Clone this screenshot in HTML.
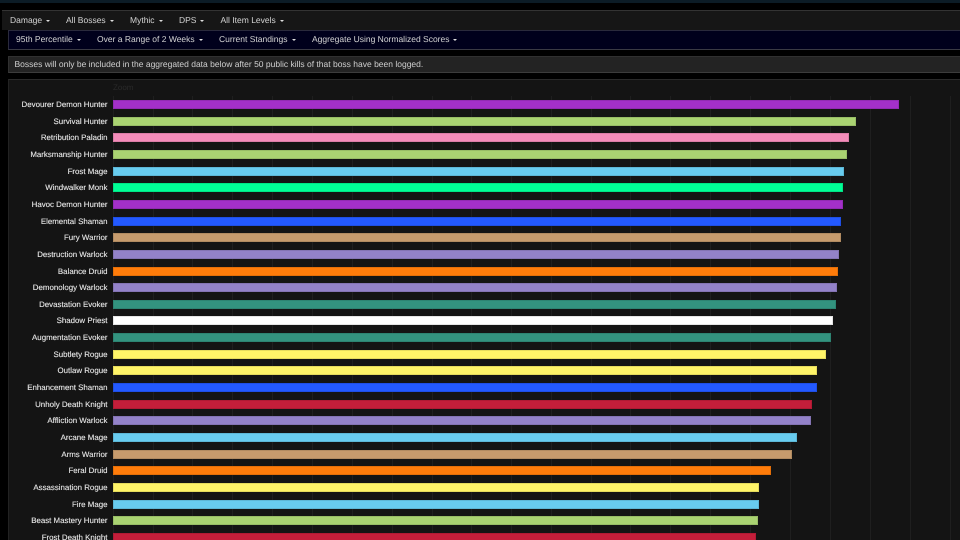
<!DOCTYPE html>
<html><head><meta charset="utf-8"><style>
html,body{margin:0;padding:0;background:#000;width:960px;height:540px;overflow:hidden}
body{position:relative;font-family:"Liberation Sans",sans-serif;color:#ddd;text-rendering:geometricPrecision}
.a{position:absolute;box-sizing:border-box}
.m{position:absolute;white-space:nowrap;font-size:8.5px;line-height:12px;color:#d4d4d4;filter:blur(.25px)}
.m i{display:inline-block;width:0;height:0;border-left:2.2px solid transparent;border-right:2.2px solid transparent;border-top:2.6px solid #ddd;margin-left:4px;vertical-align:1px}
.l{position:absolute;right:852.5px;white-space:nowrap;font-size:7.9px;line-height:10px;color:#e6e6e6;margin-top:1px;-webkit-text-stroke:.12px #e6e6e6;filter:blur(.25px)}
.b{position:absolute;left:113px;height:9px;box-sizing:border-box;border:1px solid rgba(0,0,0,.1)}
.g{position:absolute;top:96px;height:444px;width:1px;background:#1f1f1f}
</style></head><body>
<div class="a" style="left:0;top:0;width:960px;height:3px;background:#0c1c26"></div>
<div class="a" style="left:2px;top:10px;width:958px;height:20px;background:#161616;border-top:1px solid #333"></div>
<div class="m" style="left:10px;top:14px">Damage<i></i></div>
<div class="m" style="left:66px;top:14px">All Bosses<i></i></div>
<div class="m" style="left:130px;top:14px">Mythic<i></i></div>
<div class="m" style="left:179px;top:14px">DPS<i></i></div>
<div class="m" style="left:220.5px;top:14px">All Item Levels<i></i></div>
<div class="a" style="left:8px;top:30px;width:952px;height:20px;background:#00001c;border-top:1px solid #2a2a3c;border-bottom:1px solid #3a3a44;border-left:1px solid #2a2a3c"></div>
<div class="m" style="left:16px;top:33px">95th Percentile<i></i></div>
<div class="m" style="left:97px;top:33px">Over a Range of 2 Weeks<i></i></div>
<div class="m" style="left:219px;top:33px">Current Standings<i></i></div>
<div class="m" style="left:312px;top:33px">Aggregate Using Normalized Scores<i></i></div>
<div class="a" style="left:8px;top:56px;width:952px;height:17px;background:#232323;border-top:1px solid #303030;border-bottom:1px solid #3c3c3c;border-left:1px solid #303030"></div>
<div class="m" style="left:14.5px;top:58px;color:#d0d0d0">Bosses will only be included in the aggregated data below after 50 public kills of that boss have been logged.</div>
<div class="a" style="left:8px;top:79px;width:952px;height:461px;background:#141414;border-top:1px solid #2a2a2a;border-left:1px solid #222"></div>
<div class="a" style="left:113px;top:83px;font-size:8px;line-height:10px;color:#2a2a2a">Zoom</div>
<div class="g" style="left:113px"></div><div class="g" style="left:153px"></div><div class="g" style="left:192px"></div><div class="g" style="left:232px"></div><div class="g" style="left:272px"></div><div class="g" style="left:312px"></div><div class="g" style="left:352px"></div><div class="g" style="left:392px"></div><div class="g" style="left:432px"></div><div class="g" style="left:471px"></div><div class="g" style="left:511px"></div><div class="g" style="left:551px"></div><div class="g" style="left:591px"></div><div class="g" style="left:630px"></div><div class="g" style="left:670px"></div><div class="g" style="left:710px"></div><div class="g" style="left:750px"></div><div class="g" style="left:790px"></div><div class="g" style="left:830px"></div><div class="g" style="left:870px"></div><div class="g" style="left:910px"></div><div class="g" style="left:950px"></div>
<div class="l" style="top:99px">Devourer Demon Hunter</div><div class="b" style="top:100px;width:786px;background:#a330c9"></div>
<div class="l" style="top:115.65px">Survival Hunter</div><div class="b" style="top:116.65px;width:743px;background:#aad372"></div>
<div class="l" style="top:132.3px">Retribution Paladin</div><div class="b" style="top:133.3px;width:736px;background:#f48cba"></div>
<div class="l" style="top:148.95px">Marksmanship Hunter</div><div class="b" style="top:149.95px;width:734px;background:#aad372"></div>
<div class="l" style="top:165.6px">Frost Mage</div><div class="b" style="top:166.6px;width:731px;background:#68ccef"></div>
<div class="l" style="top:182.25px">Windwalker Monk</div><div class="b" style="top:183.25px;width:730px;background:#00ff96"></div>
<div class="l" style="top:198.9px">Havoc Demon Hunter</div><div class="b" style="top:199.9px;width:729.5px;background:#a330c9"></div>
<div class="l" style="top:215.55px">Elemental Shaman</div><div class="b" style="top:216.55px;width:728px;background:#2359ff"></div>
<div class="l" style="top:232.2px">Fury Warrior</div><div class="b" style="top:233.2px;width:728px;background:#c69b6d"></div>
<div class="l" style="top:248.85px">Destruction Warlock</div><div class="b" style="top:249.85px;width:726px;background:#9382c9"></div>
<div class="l" style="top:265.5px">Balance Druid</div><div class="b" style="top:266.5px;width:725px;background:#ff7c0a"></div>
<div class="l" style="top:282.15px">Demonology Warlock</div><div class="b" style="top:283.15px;width:724px;background:#9382c9"></div>
<div class="l" style="top:298.8px">Devastation Evoker</div><div class="b" style="top:299.8px;width:723px;background:#33937f"></div>
<div class="l" style="top:315.45px">Shadow Priest</div><div class="b" style="top:316.45px;width:720px;background:#fff"></div>
<div class="l" style="top:332.1px">Augmentation Evoker</div><div class="b" style="top:333.1px;width:718px;background:#33937f"></div>
<div class="l" style="top:348.75px">Subtlety Rogue</div><div class="b" style="top:349.75px;width:713px;background:#fff468"></div>
<div class="l" style="top:365.4px">Outlaw Rogue</div><div class="b" style="top:366.4px;width:704px;background:#fff468"></div>
<div class="l" style="top:382.05px">Enhancement Shaman</div><div class="b" style="top:383.05px;width:703.5px;background:#2359ff"></div>
<div class="l" style="top:398.7px">Unholy Death Knight</div><div class="b" style="top:399.7px;width:699px;background:#c41e3a"></div>
<div class="l" style="top:415.35px">Affliction Warlock</div><div class="b" style="top:416.35px;width:698px;background:#9382c9"></div>
<div class="l" style="top:432px">Arcane Mage</div><div class="b" style="top:433px;width:683.5px;background:#68ccef"></div>
<div class="l" style="top:448.65px">Arms Warrior</div><div class="b" style="top:449.65px;width:678.5px;background:#c69b6d"></div>
<div class="l" style="top:465.3px">Feral Druid</div><div class="b" style="top:466.3px;width:658px;background:#ff7c0a"></div>
<div class="l" style="top:481.95px">Assassination Rogue</div><div class="b" style="top:482.95px;width:646px;background:#fff468"></div>
<div class="l" style="top:498.6px">Fire Mage</div><div class="b" style="top:499.6px;width:646px;background:#68ccef"></div>
<div class="l" style="top:515.25px">Beast Mastery Hunter</div><div class="b" style="top:516.25px;width:644.5px;background:#aad372"></div>
<div class="l" style="top:531.9px">Frost Death Knight</div><div class="b" style="top:532.9px;width:643px;background:#c41e3a"></div>
</body></html>
